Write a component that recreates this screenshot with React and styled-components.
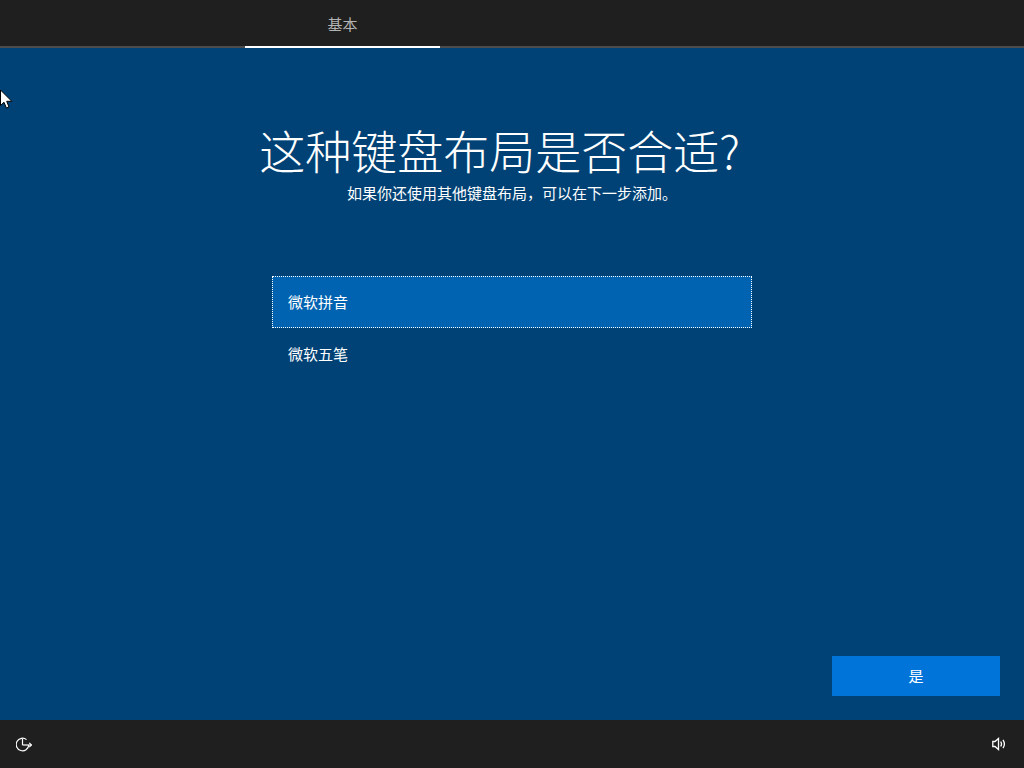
import React from 'react'
import styled, { createGlobalStyle } from 'styled-components'

const GlobalStyle = createGlobalStyle`
  html, body {
    margin: 0;
    padding: 0;
    height: 100%;
    overflow: hidden;
  }
  body {
    font-family: "Noto Sans CJK SC", "Liberation Sans", sans-serif;
    background: #004275;
    color: #fff;
  }
`

const Page = styled.div`
  position: relative;
  display: flex;
  flex-direction: column;
  width: 100vw;
  height: 100vh;
`

const TopBar = styled.header`
  display: flex;
  flex: none;
  height: 46px;
  padding-left: 245px;
  background: #1f1f1f;
  border-bottom: 2px solid #4c4c4c;
`

const Tab = styled.div`
  display: flex;
  align-items: center;
  justify-content: center;
  width: 195px;
  height: 48px;
  box-sizing: border-box;
  margin-bottom: -2px;
  font-size: 15px;
  color: #b4b4b4;
  border-bottom: 2px solid #fff;
`

const Main = styled.main`
  display: flex;
  flex: 1;
  flex-direction: column;
  align-items: center;
  padding: 71px 24px 24px;
  min-height: 0;
`

const Title = styled.h1`
  margin: 0;
  padding-right: 25px;
  font-size: 46px;
  font-weight: 300;
  line-height: 60px;
  white-space: nowrap;
`

const Subtitle = styled.p`
  margin: 3px 0 0;
  font-size: 15px;
  line-height: 22px;
  white-space: nowrap;
`

const List = styled.ul`
  display: flex;
  flex-direction: column;
  width: 480px;
  margin: 72px 0 0;
  padding: 0;
  list-style: none;
`

const Option = styled.li`
  display: flex;
  align-items: center;
  height: 52px;
  padding: 0 16px 2px;
  box-sizing: border-box;
  font-size: 15px;
  background: ${p => (p.$selected ? '#0063b1' : 'transparent')};
  outline: ${p => (p.$selected ? '1px dotted #fff' : 'none')};
  outline-offset: -1px;
`

const Actions = styled.div`
  display: flex;
  justify-content: flex-end;
  align-self: stretch;
  margin-top: auto;
`

const PrimaryButton = styled.button`
  width: 168px;
  height: 40px;
  border: none;
  padding: 0 0 2px;
  font: inherit;
  font-size: 15px;
  color: #fff;
  background: #0074d9;
`

const BottomBar = styled.footer`
  display: flex;
  flex: none;
  align-items: center;
  justify-content: space-between;
  height: 48px;
  padding: 0 16px;
  background: #1f1f1f;
`

const IconButton = styled.span`
  display: flex;
  width: 16px;
  height: 16px;
  color: #fff;
`

const Cursor = styled.svg`
  position: absolute;
  left: 0;
  top: 89px;
  width: 13px;
  height: 20px;
`

const EaseIcon = () => (
  <svg width="16" height="16" viewBox="0 0 16 16" fill="none" stroke="currentColor" strokeWidth="1.2">
    <path d="M10.5 3.6A6.3 6.3 0 1 0 12.8 9" />
    <path d="M6.5 2.7V9" />
    <path d="M6.5 9H15.5" />
    <path d="M13.3 6.9 15.5 9 13.3 11.1" />
  </svg>
)

const VolumeIcon = () => (
  <svg width="16" height="16" viewBox="0 0 16 16" fill="none" stroke="currentColor" strokeWidth="1.3">
    <path d="M0.8 5.5H3L6.5 2.5V13.5L3 10.5H0.8Z" />
    <path d="M8.7 5.5C9.7 7 9.7 9 8.7 10.5" />
    <path d="M11 3.8C12.8 6.5 12.8 9.5 11 12.2" />
  </svg>
)

const App = () => (
  <>
    <GlobalStyle />
    <Page>
      <TopBar>
        <Tab>基本</Tab>
      </TopBar>
      <Main>
        <Title>这种键盘布局是否合适?</Title>
        <Subtitle>如果你还使用其他键盘布局，可以在下一步添加。</Subtitle>
        <List>
          <Option $selected>微软拼音</Option>
          <Option>微软五笔</Option>
        </List>
        <Actions>
          <PrimaryButton>是</PrimaryButton>
        </Actions>
      </Main>
      <BottomBar>
        <IconButton><EaseIcon /></IconButton>
        <IconButton><VolumeIcon /></IconButton>
      </BottomBar>
      <Cursor viewBox="0 0 13 20">
        <path d="M0.5 1V16.5L4 13.3 6.4 19 9 18 6.7 12.3H11.8Z" fill="#fff" stroke="#000" strokeWidth="1" />
      </Cursor>
    </Page>
  </>
)

export default App
